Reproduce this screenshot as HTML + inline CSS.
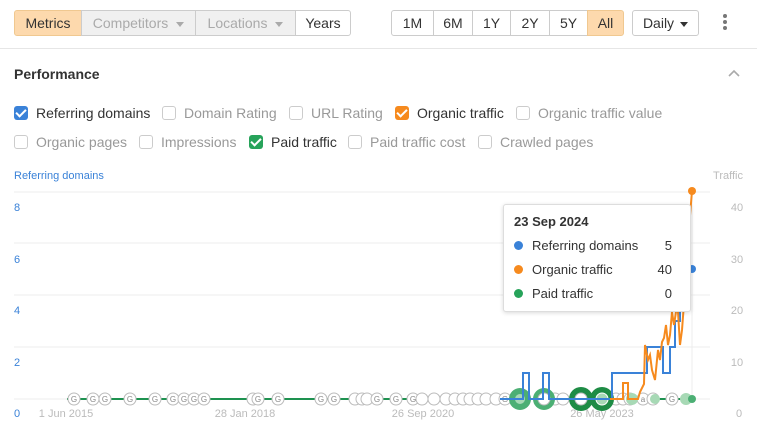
<!DOCTYPE html>
<html><head><meta charset="utf-8"><style>
*{box-sizing:border-box;margin:0;padding:0}
body{width:757px;height:431px;background:#fff;font-family:"Liberation Sans",sans-serif;position:relative;overflow:hidden;color:#333}
.b{position:absolute;top:10px;height:26px;border:1px solid #ccc;font-size:14px;line-height:24px;text-align:center;color:#333;background:#fff}
.g{background:#f0f0f0;color:#aaa}
.o{background:#fdd9ad;border-color:#f0c890}
.tri{display:inline-block;border-left:4px solid transparent;border-right:4px solid transparent;border-top:5px solid #aaa;vertical-align:middle;margin-left:8px}
.cb{position:absolute;font-size:14px;color:#999;height:16px;line-height:16px}
.cb i{display:inline-block;width:14px;height:14px;border:1px solid #ccc;border-radius:3px;vertical-align:-2px;margin-right:8px;position:relative}
.cb.on{color:#333}
.cb i.c{border:none}
.cb i.c:after{content:"";position:absolute;left:4px;top:1px;width:4px;height:8px;border:solid #fff;border-width:0 2px 2px 0;transform:rotate(45deg)}
</style></head><body>
<div class="b o" style="left:14px;width:68px;border-radius:3px 0 0 3px">Metrics</div>
<div class="b g" style="left:81px;width:115px">Competitors<span class="tri"></span></div>
<div class="b g" style="left:195px;width:101px">Locations<span class="tri"></span></div>
<div class="b" style="left:295px;width:56px;border-radius:0 3px 3px 0">Years</div>
<div class="b" style="left:391px;width:43px;border-radius:3px 0 0 3px">1M</div>
<div class="b" style="left:433px;width:40px">6M</div>
<div class="b" style="left:472px;width:39px">1Y</div>
<div class="b" style="left:510px;width:40px">2Y</div>
<div class="b" style="left:549px;width:39px">5Y</div>
<div class="b o" style="left:587px;width:37px;border-radius:0 3px 3px 0">All</div>
<div class="b" style="left:632px;width:67px;border-radius:3px">Daily<span class="tri" style="border-top-color:#333;margin-left:6px"></span></div>
<div style="position:absolute;left:723px;top:14px;width:4px">
<div style="width:4px;height:4px;border-radius:2px;background:#777;margin-bottom:2px"></div><div style="width:4px;height:4px;border-radius:2px;background:#777;margin-bottom:2px"></div><div style="width:4px;height:4px;border-radius:2px;background:#777"></div></div>
<div style="position:absolute;left:0;top:48px;width:757px;height:1px;background:#e6e6e6"></div>
<div style="position:absolute;left:14px;top:66px;font-weight:bold;font-size:14px;color:#333">Performance</div>
<svg style="position:absolute;left:727px;top:68px" width="14" height="10"><path d="M2 8 L7 3 L12 8" stroke="#aaa" stroke-width="1.6" fill="none"/></svg>

<div class="cb on" style="left:14px;top:105px"><i class="c" style="background:#3a82d8"></i>Referring domains</div>
<div class="cb" style="left:162px;top:105px"><i></i>Domain Rating</div>
<div class="cb" style="left:289px;top:105px"><i></i>URL Rating</div>
<div class="cb on" style="left:395px;top:105px"><i class="c" style="background:#f68a1e"></i>Organic traffic</div>
<div class="cb" style="left:516px;top:105px"><i></i>Organic traffic value</div>
<div class="cb" style="left:14px;top:134px"><i></i>Organic pages</div>
<div class="cb" style="left:139px;top:134px"><i></i>Impressions</div>
<div class="cb on" style="left:249px;top:134px"><i class="c" style="background:#27a35a"></i>Paid traffic</div>
<div class="cb" style="left:348px;top:134px"><i></i>Paid traffic cost</div>
<div class="cb" style="left:478px;top:134px"><i></i>Crawled pages</div>

<svg style="position:absolute;left:0;top:160px" width="757" height="271" font-family="Liberation Sans, sans-serif">
<text x="14" y="19" font-size="11" fill="#3a82d8">Referring domains</text>
<text x="743" y="19" font-size="11" fill="#bbb" text-anchor="end">Traffic</text>
<g stroke="#ececec" stroke-width="1">
<line x1="14" x2="710" y1="32" y2="32"/><line x1="14" x2="710" y1="83" y2="83"/><line x1="14" x2="710" y1="135" y2="135"/><line x1="14" x2="710" y1="187" y2="187"/><line x1="14" x2="710" y1="239" y2="239"/>
<line x1="692" x2="692" y1="32" y2="239"/>
</g>
<g font-size="11" fill="#3a82d8"><text x="14" y="51">8</text><text x="14" y="103">6</text><text x="14" y="154">4</text><text x="14" y="206">2</text><text x="14" y="257">0</text></g>
<g font-size="11" fill="#bbb" text-anchor="middle"><text x="737" y="51">40</text><text x="737" y="103">30</text><text x="737" y="154">20</text><text x="737" y="206">10</text><text x="739" y="257">0</text>
<text x="66" y="257">1 Jun 2015</text><text x="245" y="257">28 Jan 2018</text><text x="423" y="257">26 Sep 2020</text><text x="602" y="257">26 May 2023</text></g>
<line x1="67" x2="692" y1="239" y2="239" stroke="#1e9250" stroke-width="2"/>
<g fill="#fff" stroke="#bbb" stroke-width="1" font-size="8" text-anchor="middle">
<circle cx="74" cy="239" r="6"/><circle cx="93" cy="239" r="6"/><circle cx="105" cy="239" r="6"/><circle cx="130" cy="239" r="6"/><circle cx="155" cy="239" r="6"/><circle cx="173" cy="239" r="6"/><circle cx="184" cy="239" r="6"/><circle cx="194" cy="239" r="6"/><circle cx="204" cy="239" r="6"/><circle cx="253" cy="239" r="6"/><circle cx="258" cy="239" r="6"/><circle cx="278" cy="239" r="6"/><circle cx="321" cy="239" r="6"/><circle cx="334" cy="239" r="6"/><circle cx="355" cy="239" r="6"/><circle cx="362" cy="239" r="6"/><circle cx="367" cy="239" r="6"/><circle cx="377" cy="239" r="6"/><circle cx="396" cy="239" r="6"/><circle cx="413" cy="239" r="6"/><circle cx="422" cy="239" r="6"/><circle cx="434" cy="239" r="6"/><circle cx="446" cy="239" r="6"/><circle cx="455" cy="239" r="6"/><circle cx="463" cy="239" r="6"/><circle cx="470" cy="239" r="6"/><circle cx="478" cy="239" r="6"/><circle cx="486" cy="239" r="6"/><circle cx="496" cy="239" r="6"/><circle cx="505" cy="239" r="6"/><circle cx="555" cy="239" r="6"/><circle cx="563" cy="239" r="6"/><circle cx="616" cy="239" r="6"/><circle cx="623" cy="239" r="6"/><circle cx="630" cy="239" r="6"/><circle cx="643" cy="239" r="6"/><circle cx="653" cy="239" r="6"/><circle cx="672" cy="239" r="6"/>
</g>
<g font-size="8" fill="#888" text-anchor="middle"><text x="74" y="242">G</text><text x="93" y="242">G</text><text x="105" y="242">G</text><text x="130" y="242">G</text><text x="155" y="242">G</text><text x="173" y="242">G</text><text x="184" y="242">G</text><text x="194" y="242">G</text><text x="204" y="242">G</text><text x="258" y="242">G</text><text x="278" y="242">G</text><text x="321" y="242">G</text><text x="334" y="242">G</text><text x="377" y="242">G</text><text x="396" y="242">G</text><text x="413" y="242">G</text><text x="505" y="242">G</text><text x="643" y="242">a</text><text x="672" y="242">G</text></g>
<circle cx="520" cy="239" r="11" fill="#4caf74"/><circle cx="520" cy="239" r="5" fill="#a7d9b5"/>
<circle cx="544" cy="239" r="11" fill="#4caf74"/><circle cx="544" cy="239" r="6" fill="#fff" stroke="#bbb"/>
<circle cx="581" cy="239" r="12" fill="#1e8c45"/><circle cx="581" cy="239" r="6" fill="#fff" stroke="#bbb"/>
<circle cx="602" cy="239" r="12" fill="#1e8c45"/><circle cx="602" cy="239" r="6" fill="#a7d9b5" stroke="#fff"/>
<circle cx="632" cy="239" r="6" fill="#a7d9b5"/><circle cx="655" cy="239" r="5" fill="#a7d9b5"/><circle cx="686" cy="239" r="6" fill="#a7d9b5"/><circle cx="692" cy="239" r="4" fill="#4caf74"/>
<path d="M500 239 H523 V213 H529 V239 H543 V213 H549 V239 H612 V213 H647 V187 H663 V213 H670 V187 H675 V161 H680 V135 H684 V135 H690 V109 H692" stroke="#3a82d8" stroke-width="2" fill="none"/>
<path d="M610 239 H623 V223 H628 V239 H638 L640 232 L644 224 L645 185 L648 200 L650 195 L652 210 L655 220 L658 190 L660 200 L662 182 L664 178 L666 165 L668 185 L670 175 L672 152 L674 165 L677 145 L678 152 L680 185 L682 170 L685 130 L688 80 L692 31" stroke="#f68a1e" stroke-width="2" fill="none"/>
<circle cx="692" cy="31" r="4" fill="#f68a1e"/><circle cx="692" cy="109" r="4" fill="#3a82d8"/>
</svg>

<div style="position:absolute;left:503px;top:204px;width:188px;height:108px;background:#fff;border:1px solid #ddd;border-radius:3px;box-shadow:0 1px 4px rgba(0,0,0,.15);font-size:13px;color:#333">
<div style="position:absolute;left:10px;top:9px;font-weight:bold">23 Sep 2024</div>
<div style="position:absolute;left:10px;top:33px"><span style="display:inline-block;width:9px;height:9px;border-radius:5px;background:#3a82d8;margin-right:9px"></span>Referring domains</div><div style="position:absolute;right:18px;top:33px">5</div>
<div style="position:absolute;left:10px;top:57px"><span style="display:inline-block;width:9px;height:9px;border-radius:5px;background:#f68a1e;margin-right:9px"></span>Organic traffic</div><div style="position:absolute;right:18px;top:57px">40</div>
<div style="position:absolute;left:10px;top:81px"><span style="display:inline-block;width:9px;height:9px;border-radius:5px;background:#27a35a;margin-right:9px"></span>Paid traffic</div><div style="position:absolute;right:18px;top:81px">0</div>
</div>
</body></html>
